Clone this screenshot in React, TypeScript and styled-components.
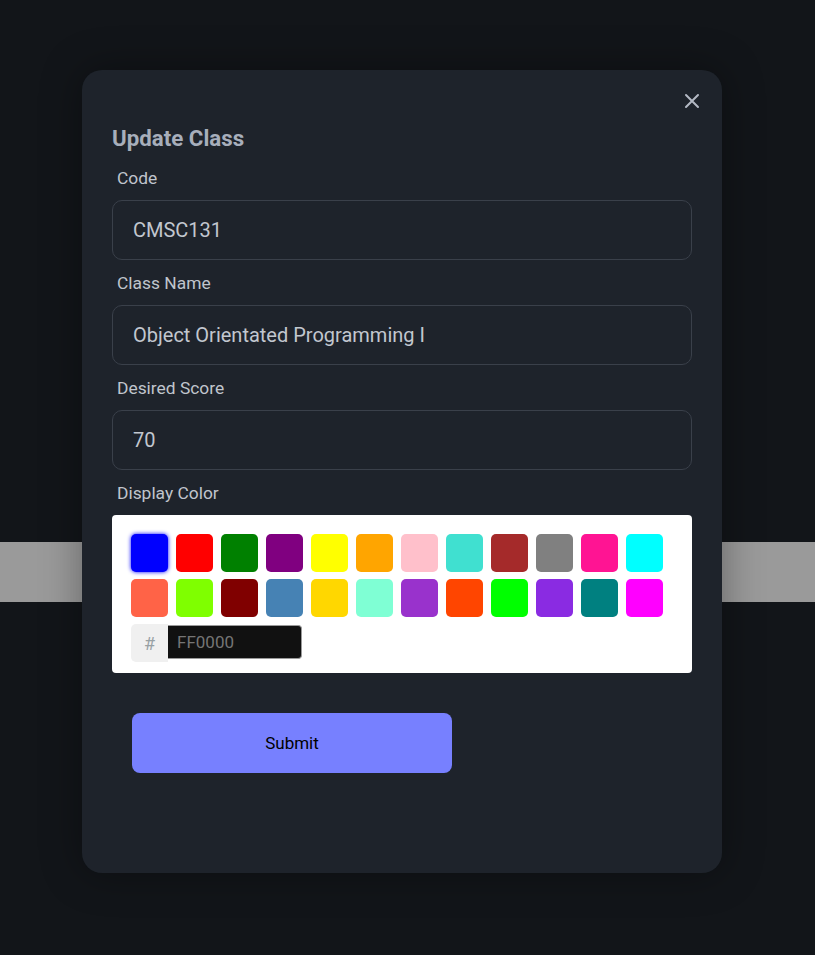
import { useState } from "react";
import styled, { createGlobalStyle } from "styled-components";

const GlobalStyle = createGlobalStyle`
  html, body {
    margin: 0;
    padding: 0;
    background: #121519;
    font-family: Roboto, "Liberation Sans", sans-serif;
  }
`;

const Page = styled.div`
  position: relative;
  min-height: 955px;
  box-sizing: border-box;
  padding: 70px 0 0 82px;
  background: #121519;
`;

// grey strip from the page underneath the overlay
const BackdropBand = styled.div`
  position: absolute;
  left: 0;
  right: 0;
  top: 542px;
  height: 60px;
  background: #9a9a9a;
`;

const Modal = styled.div`
  position: relative;
  width: 640px;
  height: 803px;
  box-sizing: border-box;
  padding: 51px 30px 0 30px;
  background: #1e232b;
  border-radius: 20px;
  box-shadow: 0 0 40px rgba(0, 0, 0, 0.35);
  display: flex;
  flex-direction: column;
`;

const CloseButton = styled.button`
  position: absolute;
  right: 20px;
  top: 21px;
  width: 20px;
  height: 20px;
  padding: 0;
  border: none;
  background: transparent;
  color: #b3b9c4;
  cursor: pointer;
  display: flex;
  align-items: center;
  justify-content: center;
`;

const Title = styled.h2`
  margin: 0;
  font-size: 22.3px;
  line-height: 34px;
  font-weight: 700;
  color: #a7aebb;
`;

const Label = styled.label`
  display: block;
  margin: 13px 0 12px 5px;
  font-size: 17.4px;
  line-height: 20px;
  color: #c0c5cd;
`;

const TextInput = styled.input`
  width: 100%;
  height: 60px;
  box-sizing: border-box;
  padding: 0 20px;
  border: 1px solid #3a404a;
  border-radius: 10px;
  background: #1e232b;
  color: #c2c7cf;
  font-family: Roboto, "Liberation Sans", sans-serif;
  font-size: 20px;
  outline: none;
`;

const PickerCard = styled.div`
  background: #ffffff;
  border-radius: 4px;
  padding: 19px 11px 11px 19px;
`;

const SwatchGrid = styled.div`
  display: flex;
  flex-wrap: wrap;
  gap: 7px 8px;
`;

const Swatch = styled.div<{ $color: string; $active: boolean }>`
  width: 37px;
  height: 38px;
  border-radius: 5px;
  background: ${({ $color }) => $color};
  box-shadow: ${({ $active, $color }) => ($active ? `0 0 4px ${$color}` : "none")};
  cursor: pointer;
`;

const HexRow = styled.div`
  display: flex;
  margin-top: 7px;
`;

const HashBox = styled.div`
  width: 37px;
  height: 38px;
  background: #f0f0f0;
  border-radius: 5px 0 0 5px;
  color: #98a1a4;
  font-size: 18px;
  display: flex;
  align-items: center;
  justify-content: center;
`;

const HexInput = styled.input`
  width: 134px;
  height: 34px;
  box-sizing: border-box;
  margin-top: 1px;
  padding: 0 0 0 9px;
  border: 1px solid #9a9a9a;
  border-left: none;
  border-radius: 0 4px 4px 0;
  background: #111111;
  color: #6f6f6f;
  font-family: Roboto, "Liberation Sans", sans-serif;
  font-size: 17px;
  outline: none;
`;

const SubmitButton = styled.button`
  width: 320px;
  height: 60px;
  margin: 40px 0 0 20px;
  border: none;
  border-radius: 8px;
  background: #7780ff;
  color: #000000;
  font-family: Roboto, "Liberation Sans", sans-serif;
  font-size: 17px;
  cursor: pointer;
`;

const COLORS = [
  "#0000FF", "#FF0000", "#008000", "#800080", "#FFFF00", "#FFA500",
  "#FFC0CB", "#40E0D0", "#A52A2A", "#808080", "#FF1493", "#00FFFF",
  "#FF6347", "#7FFF00", "#800000", "#4682B4", "#FFD700", "#7FFFD4",
  "#9932CC", "#FF4500", "#00FF00", "#8A2BE2", "#008080", "#FF00FF",
];

export default function App() {
  const [code, setCode] = useState("CMSC131");
  const [name, setName] = useState("Object Orientated Programming I");
  const [score, setScore] = useState("70");
  const [color, setColor] = useState("#0000FF");

  return (
    <>
      <GlobalStyle />
      <Page>
        <BackdropBand />
        <Modal>
          <CloseButton aria-label="Close">
            <svg width="16" height="16" viewBox="0 0 16 16" fill="none">
              <path d="M2 2L14 14M14 2L2 14" stroke="currentColor" strokeWidth="2" strokeLinecap="round" />
            </svg>
          </CloseButton>
          <Title>Update Class</Title>
          <Label>Code</Label>
          <TextInput value={code} onChange={(e) => setCode(e.target.value)} />
          <Label>Class Name</Label>
          <TextInput value={name} onChange={(e) => setName(e.target.value)} />
          <Label>Desired Score</Label>
          <TextInput value={score} onChange={(e) => setScore(e.target.value)} />
          <Label>Display Color</Label>
          <PickerCard>
            <SwatchGrid>
              {COLORS.map((c) => (
                <Swatch key={c} $color={c} $active={c === color} onClick={() => setColor(c)} />
              ))}
            </SwatchGrid>
            <HexRow>
              <HashBox>#</HashBox>
              <HexInput placeholder="FF0000" />
            </HexRow>
          </PickerCard>
          <SubmitButton>Submit</SubmitButton>
        </Modal>
      </Page>
    </>
  );
}
